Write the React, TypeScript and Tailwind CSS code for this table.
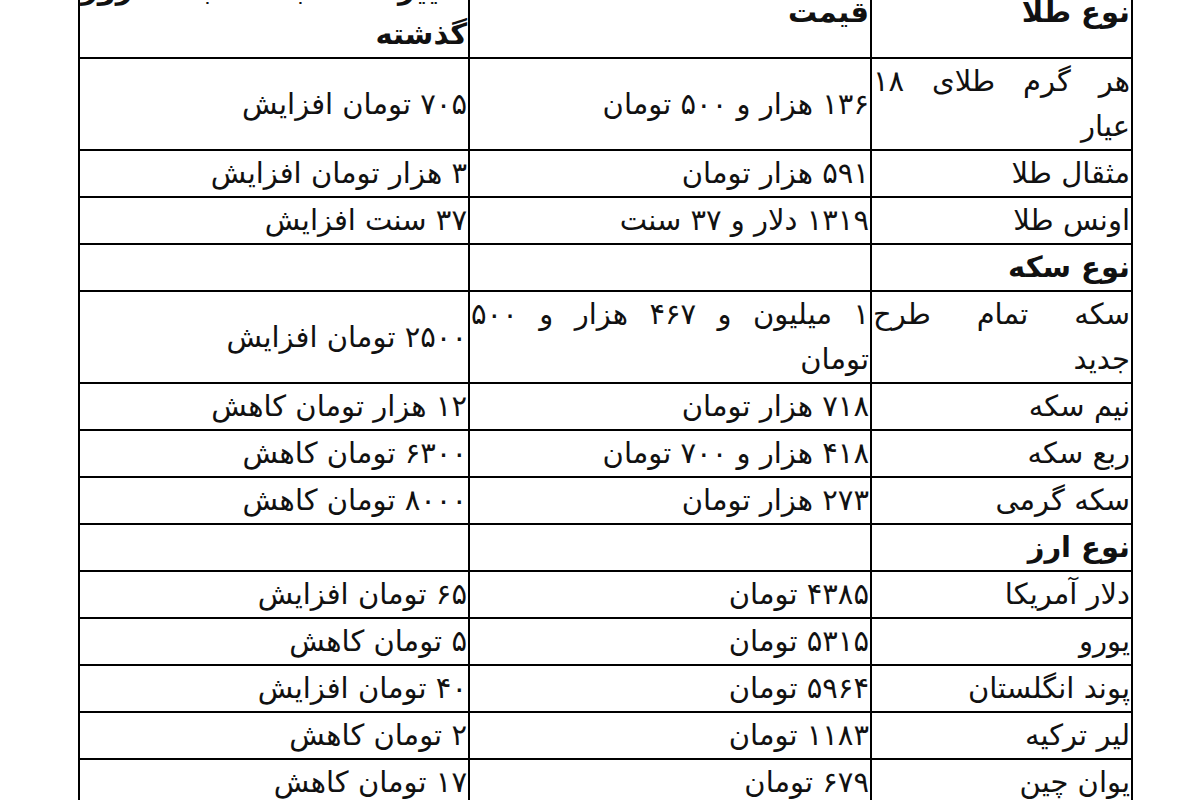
type Row = {
  name: string | string[];
  price: string | string[];
  change: string;
  head?: boolean;
};

const rows: Row[] = [
  { name: ['هر گرم طلای ۱۸', 'عیار'], price: '۱۳۶ هزار و ۵۰۰ تومان', change: '۷۰۵ تومان افزایش' },
  { name: 'مثقال طلا', price: '۵۹۱ هزار تومان', change: '۳ هزار تومان افزایش' },
  { name: 'اونس طلا', price: '۱۳۱۹ دلار و ۳۷ سنت', change: '۳۷ سنت افزایش' },
  { name: 'نوع سکه', price: '', change: '', head: true },
  { name: ['سکه تمام طرح', 'جدید'], price: ['۱ میلیون و ۴۶۷ هزار و ۵۰۰', 'تومان'], change: '۲۵۰۰ تومان افزایش' },
  { name: 'نیم سکه', price: '۷۱۸ هزار تومان', change: '۱۲ هزار تومان کاهش' },
  { name: 'ربع سکه', price: '۴۱۸ هزار و ۷۰۰ تومان', change: '۶۳۰۰ تومان کاهش' },
  { name: 'سکه گرمی', price: '۲۷۳ هزار تومان', change: '۸۰۰۰ تومان کاهش ' },
  { name: 'نوع ارز', price: '', change: '', head: true },
  { name: 'دلار آمریکا', price: '۴۳۸۵ تومان', change: '۶۵ تومان افزایش' },
  { name: 'یورو', price: '۵۳۱۵ تومان', change: '۵ تومان کاهش' },
  { name: 'پوند انگلستان', price: '۵۹۶۴ تومان', change: '۴۰ تومان افزایش' },
  { name: 'لیر ترکیه', price: '۱۱۸۳ تومان', change: '۲ تومان کاهش' },
  { name: 'یوان چین', price: '۶۷۹ تومان', change: '۱۷ تومان کاهش' },
];

function CellText({ value }: { value: string | string[] }) {
  if (Array.isArray(value)) {
    return (
      <>
        <span className="block text-justify [text-align-last:justify]">{value[0]}</span>
        <span className="block">{value[1]}</span>
      </>
    );
  }
  return <>{value}</>;
}

const cell = 'border-2 border-black px-[1px] py-0 align-middle text-right whitespace-pre';

export default function App() {
  return (
    <div className="h-[800px] w-[1200px] overflow-hidden bg-white">
      <table
        dir="rtl"
        className="-mt-[35px] ml-[78px] w-[1053px] table-fixed border-collapse text-[29px] leading-[45px] text-[#111]"
        style={{ fontFamily: '"DejaVu Sans", Tahoma, sans-serif' }}
      >
        <colgroup>
          <col className="w-[261px]" />
          <col className="w-[402px]" />
          <col className="w-[390px]" />
        </colgroup>
        <thead>
          <tr>
            <th className={`${cell} font-bold`}>نوع طلا</th>
            <th className={`${cell} font-bold`}>قیمت</th>
            <th className={`${cell} font-bold`}>
              <CellText value={['تغییر نسبت به روز', 'گذشته']} />
            </th>
          </tr>
        </thead>
        <tbody>
          {rows.map((r, i) => (
            <tr key={i}>
              <td className={`${cell} ${r.head ? 'font-bold' : ''}`}>
                <CellText value={r.name} />
              </td>
              <td className={cell}>
                <CellText value={r.price} />
              </td>
              <td className={cell}>{r.change}</td>
            </tr>
          ))}
        </tbody>
      </table>
    </div>
  );
}
